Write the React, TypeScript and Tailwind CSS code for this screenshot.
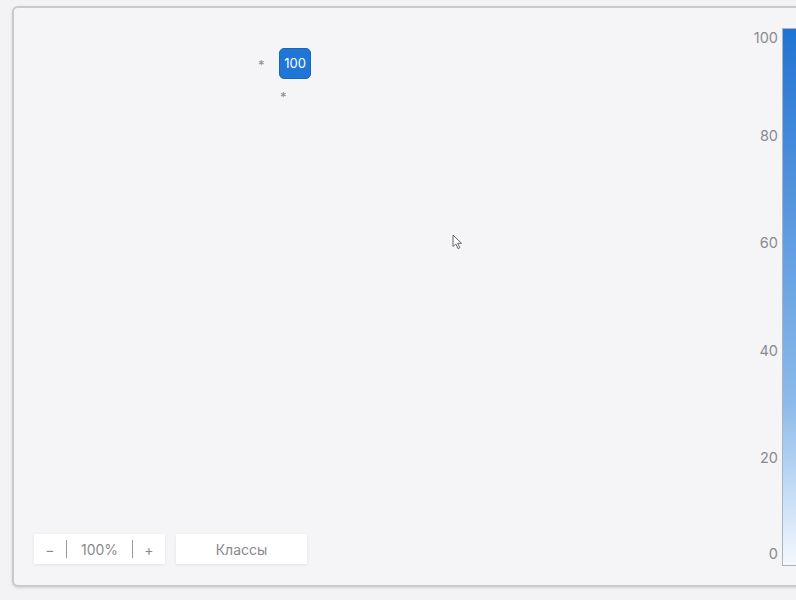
const ticks = [100, 80, 60, 40, 20, 0];
const BAR_H = 538;

function Legend() {
  return (
    <div className="absolute left-[724px] top-[20px] flex h-[538px] items-stretch gap-[4px]">
      <div className="relative w-[40px] text-right text-[14.5px] leading-[20px] text-[#8a8a8e]">
        {ticks.map((t, i) => {
          const y = (BAR_H * i) / (ticks.length - 1) - 10;
          const top = Math.min(Math.max(y, 0), BAR_H - 22);
          return (
            <div key={t} className="absolute right-0" style={{ top }}>
              {t}
            </div>
          );
        })}
      </div>
      <div className="w-[20px] border border-[#a9b4c0] bg-gradient-to-t from-[#f4f8fd] via-[#8cbbeb] via-30% to-[#1f74d2]" />
    </div>
  );
}

function Cursor() {
  return (
    <svg className="absolute left-[438px] top-[226px]" width="12" height="16" viewBox="0 0 12 16">
      <path
        d="M1 1 L1 12.5 L3.8 10 L6 14.6 L7.8 13.8 L5.7 9.3 L9.5 9.3 Z"
        fill="#fff"
        stroke="#555"
        strokeWidth="0.9"
        strokeLinejoin="round"
      />
    </svg>
  );
}

export default function App() {
  return (
    <div
      className="h-[600px] w-[796px] overflow-hidden bg-[#f3f3f5] pl-[12px] pt-[6px]"
      style={{ fontFamily: "Inter, 'Noto Sans', sans-serif" }}
    >
      <div className="relative h-[581px] w-[820px] rounded-[6px] border-2 border-[#cacacd] bg-[#f5f5f7] shadow-[0_1px_3px_rgba(0,0,0,0.12)]">
        <span className="absolute left-[244px] top-[48px] text-[13px] text-[#8a8a8e]">*</span>
        <span className="absolute left-[266px] top-[80px] text-[13px] text-[#8a8a8e]">*</span>
        <div className="absolute left-[265px] top-[40px] flex h-[31px] w-[32px] items-center justify-center rounded-[5px] border border-[#1a66bb] bg-[#1f76d4] text-[13px] text-white">
          100
        </div>

        <Cursor />
        <Legend />

        <div className="absolute bottom-[21px] left-[20px] flex gap-[11px] text-[14px] text-[#8a8a8e]">
          <div className="flex h-[30px] w-[131px] items-center bg-white shadow-[0_1px_3px_rgba(0,0,0,0.08)]">
            <span className="w-[32px] text-center">−</span>
            <span className="h-[18px] w-px bg-[#9a9a9e]" />
            <span className="flex-1 text-center">100%</span>
            <span className="h-[18px] w-px bg-[#9a9a9e]" />
            <span className="w-[32px] text-center">+</span>
          </div>
          <div className="flex h-[30px] w-[131px] items-center justify-center bg-white shadow-[0_1px_3px_rgba(0,0,0,0.08)]">
            Классы
          </div>
        </div>
      </div>
    </div>
  );
}
